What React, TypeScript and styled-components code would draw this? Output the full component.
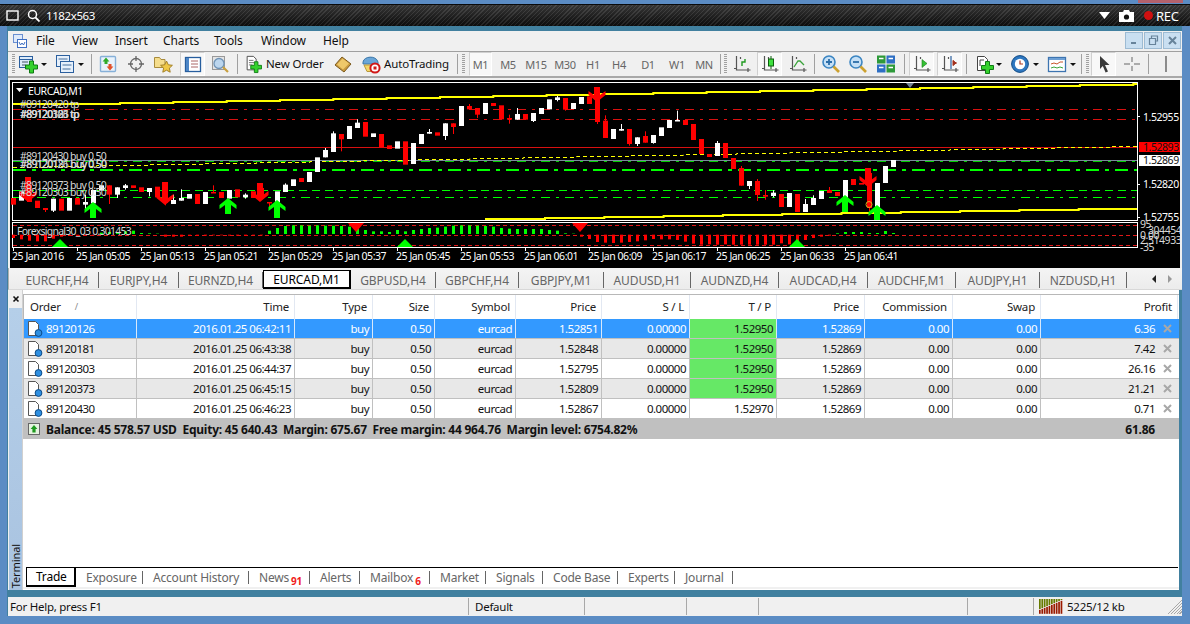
import React from "react";
import styled, { createGlobalStyle } from "styled-components";

const FONT = `"Noto Sans", "Open Sans", sans-serif`;

const GlobalStyle = createGlobalStyle`
  html, body { margin: 0; padding: 0; background: #5b8cc4; }
  * { box-sizing: border-box; }
`;

const Page = styled.div`
  width: 1190px;
  height: 624px;
  overflow: hidden;
  display: flex;
  flex-direction: column;
  background: #5b8cc4;
  font-family: ${FONT};
  font-size: 11px;
  letter-spacing: -0.1px;
  color: #111;
`;

const TopStrip = styled.div`
  height: 4px;
  flex: none;
  display: flex;
  justify-content: flex-end;
  padding-right: 7px;
`;

const RecMark = styled.div`
  width: 45px;
  height: 3px;
  background: #b4616c;
`;

const ScreenBar = styled.div`
  height: 22px;
  flex: none;
  display: flex;
  align-items: center;
  color: #fff;
  font-size: 11.5px;
  letter-spacing: -0.4px;
  border-top: 1px solid #0a0a0a;
  background:
    linear-gradient(180deg, rgba(120, 120, 120, 0.35), rgba(0, 0, 0, 0.35)),
    repeating-linear-gradient(135deg, #333 0 1px, #121212 1px 3px);
`;

const BarItem = styled.div<{ $w: number; $ml?: number }>`
  width: ${(p) => p.$w}px;
  margin-left: ${(p) => p.$ml ?? 0}px;
  flex: none;
  display: flex;
  align-items: center;
  justify-content: center;
`;

const BarText = styled.span<{ $ml?: number }>`
  margin-left: ${(p) => p.$ml ?? 0}px;
  flex: none;
`;

const BarRight = styled.div`
  margin-left: auto;
  padding-right: 9px;
  display: flex;
  align-items: center;
`;

const RecText = styled.span`
  width: 25px;
  margin-left: 3px;
  font-size: 13px;
  letter-spacing: -0.3px;
`;

const Frame = styled.div`
  flex: none;
  height: 590px;
  margin: 0 8px 0 7px;
  padding: 5px 0 0 1px;
  display: flex;
  flex-direction: column;
  background: #41809f;
`;

const MenuBar = styled.div`
  height: 20px;
  flex: none;
  display: flex;
  align-items: center;
  padding: 0 0 1px 5px;
  background: #f0f0f0;
  font-size: 12px;
`;

const MenuLogo = styled.div`
  width: 23px;
  flex: none;
  display: flex;
`;

const MenuItem = styled.span<{ $w: number }>`
  width: ${(p) => p.$w}px;
  flex: none;
`;

const WindowButtons = styled.div`
  margin-left: auto;
  margin-right: 1px;
  display: flex;
  gap: 1px;
`;

const WindowButton = styled.div`
  width: 18px;
  height: 17px;
  display: flex;
  align-items: center;
  justify-content: center;
  background: #c9dff1;
  border: 1px solid #9dbbd3;
`;

const Toolbar = styled.div`
  height: 27px;
  flex: none;
  display: flex;
  align-items: center;
  background: #f0f0f0;
  border-top: 1px solid #a0a0a0;
  border-bottom: 2px solid #a8a8a8;
`;

const Grip = styled.div<{ $ml: number }>`
  width: 3px;
  height: 20px;
  margin-left: ${(p) => p.$ml}px;
  flex: none;
  background: repeating-linear-gradient(180deg, #a0a0a0 0 1px, transparent 1px 2px);
`;

const Sep = styled.div<{ $ml: number }>`
  width: 1px;
  height: 20px;
  margin-left: ${(p) => p.$ml}px;
  flex: none;
  background: #a0a0a0;
`;

const Slot = styled.div<{ $w: number; $ml?: number; $on?: boolean }>`
  width: ${(p) => p.$w}px;
  height: 24px;
  margin-left: ${(p) => p.$ml ?? 0}px;
  flex: none;
  display: flex;
  align-items: center;
  justify-content: center;
  color: #666;
  font-size: 11px;
  letter-spacing: -0.3px;
  border: 1px solid ${(p) => (p.$on ? "#d0d0d0" : "transparent")};
  border-right-color: ${(p) => (p.$on ? "#fff" : "transparent")};
  border-bottom-color: ${(p) => (p.$on ? "#fff" : "transparent")};
  background: ${(p) => (p.$on ? "#f8f8f8" : "transparent")};
`;

const ToolLabel = styled.span<{ $w: number; $ml: number }>`
  width: ${(p) => p.$w}px;
  margin-left: ${(p) => p.$ml}px;
  padding-bottom: 2px;
  flex: none;
  font-size: 11.5px;
  letter-spacing: -0.15px;
  white-space: nowrap;
`;

const Caret = styled.div<{ $w?: number }>`
  width: ${(p) => p.$w ?? 7}px;
  flex: none;
  display: flex;
  justify-content: center;
  &::after {
    content: "";
    border-left: 3px solid transparent;
    border-right: 3px solid transparent;
    border-top: 3px solid #111;
  }
`;

const ChartWrap = styled.div`
  height: 190px;
  flex: none;
  padding: 2px 2px 0;
  background: #f0f0f0;
`;

const ChartSvg = styled.svg`
  display: block;
  background: #000;
  font-family: ${FONT};
  font-size: 10.5px;
  letter-spacing: -0.45px;
`;

const ChartNotes = styled.g`
  fill: #d8d8d8;
  letter-spacing: -0.75px;
`;

const SymbolTabs = styled.div`
  height: 22px;
  flex: none;
  display: flex;
  align-items: flex-start;
  padding: 2px 0 0 7px;
  background: linear-gradient(180deg, #f4f4f4, #ececec);
  border-left: 1px solid #b0b0b0;
  border-bottom: 1px solid #d8d8d8;
`;

const SymbolTab = styled.div<{ $w: number; $on?: boolean }>`
  width: ${(p) => p.$w}px;
  height: ${(p) => (p.$on ? 19 : 16)}px;
  margin-top: ${(p) => (p.$on ? 0 : 2)}px;
  flex: none;
  display: flex;
  align-items: center;
  justify-content: center;
  font-size: 12px;
  white-space: nowrap;
  color: ${(p) => (p.$on ? "#000" : "#666")};
  background: ${(p) => (p.$on ? "#fff" : "transparent")};
  border: ${(p) => (p.$on ? "1px solid #000" : "none")};
  border-right: ${(p) => (p.$on ? "2px solid #000" : "1px solid #666")};
  border-bottom-width: ${(p) => (p.$on ? 2 : 0)}px;
`;

const TabArrows = styled.div`
  margin-left: 25px;
  margin-top: 5px;
  display: flex;
  gap: 12px;
`;

const TabArrow = styled.div<{ $dir: "left" | "right" }>`
  width: 0;
  height: 0;
  border-top: 4px solid transparent;
  border-bottom: 4px solid transparent;
  ${(p) =>
    p.$dir === "left" ? "border-right: 4px solid #222;" : "border-left: 4px solid #999;"}
`;

const Terminal = styled.div`
  height: 300px;
  flex: none;
  display: flex;
  padding-right: 3px;
  background: #41809f;
`;

const SideStrip = styled.div`
  width: 15px;
  flex: none;
  display: flex;
  flex-direction: column;
  padding-left: 1px;
  background: #f0f0f0;
  border-right: 1px solid #d0d0d0;
`;

const SideClose = styled.div`
  height: 18px;
  flex: none;
  display: flex;
  padding: 5px 0 0 3px;
`;

const SideBody = styled.div`
  flex: 1;
  display: flex;
  align-items: flex-end;
  justify-content: center;
  padding-bottom: 2px;
  background: linear-gradient(180deg, #b5cfe9, #a9c3e0);
`;

const SideLabel = styled.span`
  writing-mode: vertical-rl;
  transform: rotate(180deg);
  color: #111;
  font-size: 11px;
`;

const TerminalMain = styled.div`
  flex: 1;
  min-width: 0;
  display: flex;
  flex-direction: column;
  background: #fff;
  padding-top: 4px;
`;

const Grid = styled.div`
  display: grid;
  grid-template-columns: 113px 158px 78px 62px 81px 86px 88px 87px 88px 88px 88px 137px;
`;

const HeadRow = styled(Grid)`
  height: 25px;
  border-top: 1px solid #b8b8b8;
  border-left: 1px solid #b8b8b8;
`;

const HeadCell = styled.div<{ $left?: boolean }>`
  display: flex;
  align-items: center;
  justify-content: ${(p) => (p.$left ? "flex-start" : "flex-end")};
  padding: 0 5px 2px 6px;
  font-size: 11.5px;
  letter-spacing: -0.2px;
  color: #222;
  border-right: 1px solid #e2e8f2;
`;

const SortMark = styled.span`
  margin-left: 14px;
  font-size: 9px;
  color: #888;
`;

const Row = styled(Grid)<{ $bg: string; $fg: string }>`
  height: 20px;
  background: ${(p) => p.$bg};
  color: ${(p) => p.$fg};
  border-bottom: 1px solid #c0c0c0;
  border-left: 1px solid #c0c0c0;
`;

const Cell = styled.div<{ $hit?: boolean; $sel?: boolean }>`
  display: flex;
  align-items: center;
  justify-content: flex-end;
  padding-right: 3px;
  white-space: nowrap;
  font-size: 11.5px;
  letter-spacing: -0.5px;
  background: ${(p) => (p.$hit ? "#66e866" : "transparent")};
  color: ${(p) => (p.$hit ? "#111" : "inherit")};
  border-right: 1px solid ${(p) => (p.$sel ? "#d8e8fa" : "#c0c0c0")};
`;

const OrderCell = styled(Cell)`
  justify-content: flex-start;
  padding-left: 3px;
  gap: 3px;
`;

const ProfitCell = styled(Cell)`
  padding-right: 6px;
  gap: 8px;
  border-right: none;
`;

const Summary = styled.div`
  height: 20px;
  display: flex;
  align-items: center;
  padding-left: 4px;
  background: #c0c0c0;
  border-left: 1px solid #c0c0c0;
  font-size: 12px;
  font-weight: 700;
  letter-spacing: -0.23px;
`;

const SummaryText = styled.span`
  margin-left: 6px;
  white-space: pre;
`;

const SummaryTotal = styled.span`
  margin-left: auto;
  margin-right: 24px;
`;

const TerminalFill = styled.div`
  flex: 1;
`;

const BottomTabs = styled.div`
  height: 20px;
  flex: none;
  display: flex;
  align-items: flex-start;
  margin-left: 3px;
  margin-right: 1px;
  border-top: 1px solid #000;
`;

const BottomTab = styled.div<{ $w: number; $on?: boolean }>`
  width: ${(p) => p.$w}px;
  height: ${(p) => (p.$on ? 19 : 13)}px;
  margin-top: ${(p) => (p.$on ? 0 : 3)}px;
  flex: none;
  display: flex;
  align-items: center;
  padding-left: ${(p) => (p.$on ? 9 : 10)}px;
  font-size: 12px;
  letter-spacing: -0.2px;
  white-space: nowrap;
  color: ${(p) => (p.$on ? "#000" : "#666")};
  background: ${(p) => (p.$on ? "#fff" : "transparent")};
  border-right: ${(p) => (p.$on ? "2px solid #000" : "1px solid #666")};
  border-left: ${(p) => (p.$on ? "1px solid #000" : "none")};
  border-bottom: ${(p) => (p.$on ? "2px solid #000" : "none")};
`;

const Badge = styled.span`
  margin: 7px 0 0 2px;
  color: #f02020;
  font-size: 10px;
  font-weight: 700;
  line-height: 1;
`;

const TerminalFoot = styled.div`
  height: 3px;
  flex: none;
  background: #f0f0f0;
  border-bottom: 1px solid #fff;
`;

const Gap = styled.div`
  height: 7px;
  flex: none;
`;

const StatusBar = styled.div`
  height: 19px;
  flex: none;
  display: grid;
  grid-template-columns: 461px 116px 102px 72px 209px 66px 1fr;
  background: #f0f0f0;
  font-size: 11.5px;
  letter-spacing: -0.25px;
`;

const StatusCell = styled.div<{ $last?: boolean; $pl?: number }>`
  display: flex;
  align-items: center;
  gap: 4px;
  padding-left: ${(p) => p.$pl ?? (p.$last ? 5 : 2)}px;
  padding-bottom: 1px;
  border-right: ${(p) => (p.$last ? "none" : "1px solid #a8a8a8")};
  white-space: nowrap;
  margin: 1px 0;
`;

const StatusGrip = styled.div`
  margin-left: auto;
  width: 15px;
  height: 15px;
  align-self: flex-end;
  background: repeating-linear-gradient(135deg, transparent 0 1px, #a8a8a8 1px 2px);
  clip-path: polygon(100% 0, 100% 100%, 0 100%);
`;

const I: React.FC<{ s?: number; h?: number; children: React.ReactNode }> = ({ s = 20, h, children }) => (
  <svg width={s} height={h ?? s} viewBox={`0 0 ${s} ${h ?? s}`} fill="none">
    {children}
  </svg>
);

const Plus = ({ x, y }: { x: number; y: number }) => (
  <path
    transform={`translate(${x} ${y})`}
    d="M4 0h4v4h4v4H8v4H4V8H0V4h4z"
    fill="#34d12c"
    stroke="#0f7a14"
  />
);

const Axes = ({ x = 3, y = 2, w = 14, h = 14 }: { x?: number; y?: number; w?: number; h?: number }) => (
  <path
    d={`M${x + 1.5} ${y}v${h}h${w}M${x - 1} ${y + h - 1.5}h3M${x + 5.5} ${y + 1}v2M${x + w - 1} ${y + h - 2}v4`}
    stroke="#555"
    strokeWidth="1.2"
  />
);

const NewChartIcon = () => (
  <I>
    <rect x="1.5" y="2.5" width="13" height="11" fill="#dcebfa" stroke="#2b5f9e" />
    <path d="M1.5 5.5h13" stroke="#2b5f9e" />
    <path d="M4 8h6M4 11h4" stroke="#456" />
    <Plus x={7.5} y={7} />
  </I>
);

const ProfilesIcon = () => (
  <I>
    <rect x="1.5" y="1.5" width="13" height="11" fill="#e6f0fb" stroke="#2b5f9e" />
    <rect x="5.5" y="7.5" width="13" height="11" fill="#e6f0fb" stroke="#2b5f9e" />
    <path d="M3.5 5h9M7.5 11h9M7.5 15h8" stroke="#46709e" />
  </I>
);

const MarketIcon = () => (
  <I>
    <rect x="2.5" y="2.5" width="15" height="15" rx="1" fill="#e9f2fb" stroke="#86b0d8" strokeWidth="1.4" />
    <path d="M8 3.5l3.4 4H9.5V10h-3V7.5H4.6z" fill="#2faa2a" />
    <path d="M12 16.5l3.4-4h-1.9V10h-3v2.5H8.6z" fill="#e2512a" />
  </I>
);

const TargetIcon = () => (
  <I>
    <circle cx="10" cy="10" r="5.5" stroke="#666" strokeWidth="1.3" />
    <path d="M10 2v5M10 13v5M2 10h5M13 10h5" stroke="#666" strokeWidth="1.3" />
  </I>
);

const NavigatorIcon = () => (
  <I>
    <path d="M1.5 3.5h5l1.5 2h4v8h-10.5z" fill="#f5dd8c" stroke="#a88b3c" />
    <path d="M13.5 7l1.8 3.8 4.1.5-3 2.8.8 4.1-3.7-2-3.7 2 .8-4.1-3-2.8 4.1-.5z" fill="#efc846" stroke="#a3812a" />
  </I>
);

const TerminalIcon = () => (
  <I>
    <rect x="2.5" y="3.5" width="15" height="14" fill="#fff" stroke="#275e9e" strokeWidth="1.3" />
    <rect x="3" y="4" width="3" height="13" fill="#4d86c6" />
    <path d="M8 7h7M8 10h7M8 13h7" stroke="#a66" />
  </I>
);

const TesterIcon = () => (
  <I>
    <rect x="2.5" y="2.5" width="12" height="13" fill="#e4e4e4" stroke="#999" />
    <circle cx="9" cy="9.5" r="5" fill="#bcd6ee" stroke="#6f93b6" strokeWidth="1.3" />
    <path d="M13 13l5 5" stroke="#c8a040" strokeWidth="2.2" />
  </I>
);

const NewOrderIcon = () => (
  <I>
    <path d="M3.5 1.5h7l3 3v12h-10z" fill="#fff" stroke="#444" />
    <path d="M5.5 6h5M5.5 8.5h6M5.5 11h4" stroke="#666" />
    <Plus x={7.5} y={7.5} />
  </I>
);

const BookIcon = () => (
  <I>
    <path d="M2 11l7-8 9 7-7 8z" fill="#c99a3f" stroke="#7c5a1c" />
    <path d="M4 10.5l5.5-6 6.5 5-6 6z" fill="#eec86a" />
  </I>
);

const AutoIcon = () => (
  <I>
    <path d="M2 8c1-6 13-7 15 0v2H2z" fill="#6aa6d8" stroke="#3f78a8" />
    <path d="M3 11h14l-2 6.5H6z" fill="#f4d869" stroke="#b9983a" />
    <circle cx="14" cy="14" r="4.6" fill="#fff" stroke="#d01818" strokeWidth="2" />
    <rect x="12.5" y="12.5" width="3" height="3" fill="#d01818" />
  </I>
);

const LineChartIcon = () => (
  <I>
    <Axes />
    <path d="M10 12V8h3V5" stroke="#1f9a1f" strokeWidth="1.4" />
  </I>
);

const CandleIcon = () => (
  <I>
    <Axes />
    <path d="M11 2v13" stroke="#0d5f0d" />
    <rect x="8.5" y="5" width="5" height="7" fill="#3ee03e" stroke="#0d5f0d" />
  </I>
);

const CurveIcon = () => (
  <I>
    <Axes />
    <path d="M6 13l4-6 2 0 4 4" stroke="#3aa33a" strokeWidth="1.3" />
  </I>
);

const ZoomIcon = ({ minus }: { minus?: boolean }) => (
  <I>
    <circle cx="8" cy="8" r="6" fill="#c6e0f6" stroke="#3b85c2" strokeWidth="1.6" />
    <path d={minus ? "M5 8h6" : "M5 8h6M8 5v6"} stroke="#2c6ea8" strokeWidth="1.8" />
    <path d="M12.5 12.5l5.5 5.5" stroke="#cda22f" strokeWidth="2.6" />
  </I>
);

const TileIcon = () => (
  <I>
    <rect x="1" y="1.5" width="8.5" height="8" fill="#2e9a3a" />
    <rect x="10.5" y="1.5" width="8.5" height="8" fill="#2e6fc4" />
    <rect x="1" y="10.5" width="8.5" height="8" fill="#2e6fc4" />
    <rect x="10.5" y="10.5" width="8.5" height="8" fill="#2e9a3a" />
    <path d="M3 4.5h4.5M12.5 4.5h4.5M3 13.5h4.5M12.5 13.5h4.5" stroke="#fff" strokeWidth="1.4" />
  </I>
);

const ScrollIcon = () => (
  <I>
    <Axes />
    <path d="M10 5.5l5 4-5 4z" fill="#35c035" stroke="#1a801a" strokeWidth=".6" />
  </I>
);

const ShiftIcon = () => (
  <I>
    <Axes />
    <path d="M11 2v13" stroke="#2b5f9e" strokeWidth="1.2" />
    <path d="M17 9h-3M16 9l-3-2.6v5.2z" fill="#a2301c" stroke="#a2301c" />
  </I>
);

const InsertIcon = () => (
  <I>
    <path d="M3.5 2.5h7l3 3v11h-10z" fill="#fff" stroke="#444" />
    <path d="M6 6h4M6 6v6" stroke="#444" />
    <Plus x={7.5} y={7.5} />
  </I>
);

const ClockIcon = () => (
  <I>
    <circle cx="10" cy="10" r="8.4" fill="#2e77c0" stroke="#134c86" />
    <circle cx="10" cy="10" r="5.2" fill="#fff" />
    <path d="M10 6.5V10h3" stroke="#b03a20" strokeWidth="1.2" />
  </I>
);

const TemplateIcon = () => (
  <I>
    <rect x="1.5" y="3.5" width="17" height="14" fill="#fff" stroke="#3d74b0" strokeWidth="1.3" />
    <rect x="2" y="4" width="16" height="2" fill="#6d9fd4" />
    <path d="M4 10l3-1 3 1 3-2 3 0" stroke="#c8552a" />
    <path d="M4 14l3-1 3 1 3-1 3 1" stroke="#3aa33a" />
  </I>
);

const CursorIcon = () => (
  <I>
    <path d="M6 2l9.5 9H11l3 6.5-2.4 1-2.8-6.6L6 15z" fill="#3a3a3a" />
  </I>
);

const ThinCross = () => (
  <I>
    <path d="M10 3v5M10 12v5M2 10h6M12 10h6" stroke="#666" />
  </I>
);

const VLine = () => (
  <I>
    <path d="M10 2v16" stroke="#555" strokeWidth="1.3" />
  </I>
);

const AppLogo = () => (
  <I s={14}>
    <rect x=".5" y=".5" width="9" height="8" fill="#dfeafa" stroke="#6a8fd0" />
    <rect x="4.5" y="5.5" width="9" height="8" fill="#fff" stroke="#3f6fc2" />
    <path d="M6 8l1.5 3L9 9l1.5 2L12 8" stroke="#3f6fc2" />
  </I>
);

const OrderDoc = () => (
  <I s={16}>
    <path d="M1.5 .5h7l3 3v11h-10z" fill="#fff" stroke="#555" />
    <circle cx="11.5" cy="12" r="3.4" fill="#2f8fe0" stroke="#0a4a88" />
  </I>
);

const CloseCross = () => (
  <I s={9}>
    <path d="M1 1l7 7M8 1l-7 7" stroke="#a8a8a8" strokeWidth="2" />
  </I>
);

const UpBox = () => (
  <I s={12}>
    <rect x=".5" y=".5" width="11" height="11" fill="#e6f3e0" stroke="#666" />
    <path d="M6 2l3.4 4H7.6v3.5H4.4V6H2.6z" fill="#1f9a1f" />
  </I>
);

const MeterIcon = () => (
  <svg width="24" height="15" viewBox="0 0 24 15">
    {Array.from({ length: 10 }).map((_, k) => {
      const top = 10 - k;
      return (
        <g key={k}>
          <rect x={k * 2.4} y={0} width={1.7} height={Math.max(top, 1)} fill="#667a00" />
          <rect x={k * 2.4} y={Math.max(top, 1) + 0.8} width={1.7} height={14 - Math.max(top, 1)} fill="#9a1a00" />
        </g>
      );
    })}
  </svg>
);

// chart bars, y values are offsets in 1/3 px from y=78: [kind, bodyTop, bodyBottom, wickTop, wickBottom]
type Bar = [string, number, number, number?, number?];
const bars: Bar[] = [
  ["r", 360, 380], ["w", 340, 368], ["r", 320, 372], ["r", 368, 390], ["r", 390, 396, 390, 402],
  ["w", 362, 398, 362, 402], ["r", 362, 398], ["w", 360, 398], ["r", 360, 380], ["w", 372, 380, 350, 400],
  ["w", 336, 376], ["w", 322, 338], ["r", 322, 350, 322, 378], ["w", 328, 350, 328, 360], ["w", 322, 330, 318, 335],
  ["r", 322, 330], ["r", 328, 342], ["w", 330, 342, 330, 355], ["r", 326, 358], ["r", 340, 375, 312, 382],
  ["w", 366, 378, 350, 378], ["w", 360, 368, 334, 368], ["w", 348, 362], ["r", 348, 378], ["w", 342, 378],
  ["r", 342, 344, 322, 344], ["r", 342, 360], ["w", 336, 362], ["r", 334, 358], ["w", 350, 358, 346, 362],
  ["r", 340, 360], ["r", 330, 360], ["r", 372, 376, 372, 390], ["w", 340, 374], ["w", 320, 342, 316, 342],
  ["w", 304, 324], ["r", 300, 312], ["w", 282, 312], ["w", 238, 282], ["w", 216, 238, 210, 238],
  ["w", 166, 222, 160, 222], ["r", 168, 184, 168, 220], ["w", 144, 183], ["w", 134, 150, 124, 150], ["r", 132, 176],
  ["w", 166, 177], ["r", 168, 208], ["r", 202, 213], ["w", 190, 212],
  ["r", 190, 260], ["w", 195, 258], ["w", 168, 198], ["w", 162, 167, 153, 167], ["r", 163, 173],
  ["w", 136, 174, 136, 186], ["r", 136, 147, 136, 168], ["w", 84, 144], ["r", 84, 94, 78, 94], ["r", 90, 110, 90, 120],
  ["w", 75, 108], ["r", 75, 84], ["r", 82, 124], ["r", 120, 125, 110, 137], ["w", 108, 125, 90, 125],
  ["r", 108, 125], ["w", 105, 129, 105, 132], ["w", 90, 108], ["w", 64, 94], ["w", 58, 66, 50, 70],
  ["r", 60, 95, 60, 98], ["w", 75, 93], ["w", 57, 78], ["r", 55, 78], ["r", 55, 132, 55, 138],
  ["r", 128, 180, 112, 180], ["w", 153, 183], ["w", 153, 158, 138, 158], ["r", 153, 198, 153, 203], ["w", 178, 198, 178, 204],
  ["r", 174, 194, 160, 194], ["w", 171, 195, 171, 197], ["w", 148, 174], ["w", 126, 150], ["w", 126, 128, 98, 128],
  ["r", 126, 141], ["r", 138, 186], ["r", 183, 228], ["r", 228, 237], ["w", 195, 234, 189, 234],
  ["r", 195, 240], ["r", 240, 273], ["r", 270, 323, 264, 323], ["w", 309, 324, 309, 333], ["r", 309, 351, 303, 369],
  ["r", 351, 356, 336, 365], ["w", 344, 354, 337, 358], ["r", 348, 387], ["w", 345, 387], ["r", 348, 402],
  ["w", 378, 402, 363, 402], ["w", 360, 381, 352, 381], ["w", 339, 363], ["r", 336, 345, 327, 345], ["r", 342, 354],
  ["w", 306, 360], ["r", 303, 321], ["r", 315, 320], ["r", 285, 390, 285, 400], ["w", 315, 390], ["w", 264, 315],
  ["w", 246, 267],
];

// indicator: below 469 is a green bar up from 468, above is a red bar down from 470
const signal = [
  480, 484, 488, 490, 490, 482, 476, 474, 474, 472, 472, 464, 462, 462, 460, 458, 465, 466, 467, 476, 476, 476, 474, 474,
  473, 472, 472, 473, 473, 474, 472, 472, 458, 450, 444, 442, 442, 443, 442, 443, 443, 444, 446, 450, 456, 460, 460, 462,
  456, 460, 456, 453, 450, 449, 446, 443, 442, 442, 443, 444, 446, 450, 452, 453, 453, 453, 453, 456, 458, 466, 467, 476,
  483, 492, 494, 495, 494, 492, 490, 487, 483, 484, 484, 486, 491, 497, 500, 499, 500, 499, 500, 500, 500, 500, 500, 500,
  496, 499, 496, 486, 480, 476, 473, 466, 462, 462, 462, 465, 465, 459, 465,
];

const zy = (z: number) => 78 + z / 3;
const RED = "#ff0000";
const LIME = "#00ff00";

const stepLine = (x0: number, x1: number, y0: number, first: number, step: number, dy: number) => {
  let d = `M${x0} ${y0}`;
  let y = y0;
  for (let x = first; x < x1; x += step) {
    d += `H${x.toFixed(1)}`;
    y += dy;
    d += `V${y}`;
  }
  return `${d}H${x1}`;
};

const UpArrow = ({ x, t, b, c = LIME }: { x: number; t: number; b: number; c?: string }) => (
  <polygon
    fill={c}
    points={`${x},${t} ${x + 8.5},${t + 7} ${x + 8.5},${t + 11} ${x + 3},${t + 7} ${x + 3},${b} ${x - 3},${b} ${x - 3},${t + 7} ${x - 8.5},${t + 11} ${x - 8.5},${t + 7}`}
  />
);

const DownArrow = ({ x, t, b }: { x: number; t: number; b: number }) => (
  <polygon
    fill={RED}
    points={`${x},${b} ${x + 8.5},${b - 7} ${x + 8.5},${b - 11} ${x + 3},${b - 7} ${x + 3},${t} ${x - 3},${t} ${x - 3},${b - 7} ${x - 8.5},${b - 11} ${x - 8.5},${b - 7}`}
  />
);

const timeLabels = [
  "25 Jan 2016", "25 Jan 05:05", "25 Jan 05:13", "25 Jan 05:21", "25 Jan 05:29", "25 Jan 05:37", "25 Jan 05:45",
  "25 Jan 05:53", "25 Jan 06:01", "25 Jan 06:09", "25 Jan 06:17", "25 Jan 06:25", "25 Jan 06:33", "25 Jan 06:41",
];

const Chart = () => (
  <ChartSvg width={1170} height={188} viewBox="10 80 1170 188">
    <rect x="12.5" y="82.5" width="1125" height="138" fill="none" stroke="#fff" />
    <rect x="12.5" y="222.5" width="1125" height="25" fill="none" stroke="#fff" />

    <path d="M13 109.5H1137M13 119.5H1137" stroke="#d81010" strokeDasharray="9 6 3 6" />
    <path d="M13 147.5H1137" stroke="#d81010" />
    <path d="M13 161.5H1137" stroke={LIME} strokeDasharray="9 6 3 6" opacity="0.8" />
    <path d="M13 160.5H1137" stroke="#7a8a9a" />
    <path d="M13 170H1137" stroke={LIME} strokeWidth="2" strokeDasharray="13 6 4 6" />
    <path d="M13 190.5H1137" stroke={LIME} strokeDasharray="8 5" />
    <path d="M13 197.5H1137" stroke={LIME} strokeDasharray="9 6 3 6" />
    <path d={stepLine(13, 1137, 167.5, 43.3, 53.33, -1)} stroke="#ffff00" strokeDasharray="4 3" fill="none" />

    {bars.map(([k, t, b, wt, wb], i) => {
      const c = 13 + 8 * i;
      const col = k === "w" ? "#fff" : RED;
      return (
        <g key={i} fill={col}>
          {wt !== undefined && <rect x={c} y={zy(wt)} width={1} height={((wb as number) - wt) / 3} />}
          <rect x={c - 2} y={zy(t)} width={5} height={Math.max((b - t) / 3, 1.5)} />
        </g>
      );
    })}

    <path d={stepLine(13, 1137, 104, 120, 53.33, -1)} stroke="#ffff00" strokeWidth="2" fill="none" />
    <path d={stepLine(485, 1137, 219, 545, 59.3, -1)} stroke="#ffff00" strokeWidth="2" fill="none" />

    <DownArrow x={28} t={177} b={202} />
    <DownArrow x={165} t={182} b={205} />
    <DownArrow x={260} t={183} b={202} />
    <DownArrow x={597} t={87} b={102} />
    <DownArrow x={868} t={168} b={187} />
    <UpArrow x={93} t={202} b={218} />
    <UpArrow x={228} t={198} b={214} />
    <UpArrow x={277} t={200} b={218} />
    <UpArrow x={845} t={195} b={212} />
    <UpArrow x={877} t={205} b={220} />
    <circle cx="869" cy="204.5" r="3" fill="none" stroke="#d8b020" />
    <polygon points="906,83 914,83 910,88" fill="#708090" />
    <polygon points="16,88 23,88 19.5,92" fill="#fff" />

    <g fill="#fff">
      <text x="28" y="94.5">EURCAD,M1</text>
    </g>
    <ChartNotes>
      <text x="20" y="108">#89120420 tp</text>
      <text x="20" y="118">#89120126 tp</text>
      <text x="20.5" y="118">#89120181 tp</text>
      <text x="20" y="118">#89120303 tp</text>
      <text x="20" y="159.5">#89120430 buy 0.50</text>
      <text x="20" y="168">#89120126 buy 0.50</text>
      <text x="20.5" y="168">#89120181 buy 0.50</text>
      <text x="20" y="188.5">#89120373 buy 0.50</text>
      <text x="20" y="196">#89120303 buy 0.50</text>
    </ChartNotes>

    <path d="M13 225.5H1137M13 235.5H1137M13 245.5H1137" stroke="#e01818" strokeDasharray="4 3" />
    {signal.map((v, i) => {
      const c = 13 + 8 * i;
      return v < 469 ? (
        <rect key={i} x={c - 1} y={zy(v)} width={3} height={(468 - v) / 3} fill={LIME} />
      ) : (
        <rect key={i} x={c - 1} y={zy(470)} width={3} height={(v - 470) / 3} fill={RED} />
      );
    })}
    <polygon points="60,239 68,247 52,247" fill={LIME} />
    <polygon points="405,239 413,247 397,247" fill={LIME} />
    <polygon points="797,239 805,247 789,247" fill={LIME} />
    <polygon points="356,232 348,223 364,223" fill={RED} />
    <polygon points="580,232 572,223 588,223" fill={RED} />
    <ChartNotes>
      <text x="17" y="235">Forexsignal30_03 0.301453</text>
    </ChartNotes>

    <path d="M1137 116.5h3M1137 184.5h3M1137 217.5h3" stroke="#fff" />
    <g fill="#fff">
      <text x="1143" y="120.5">1.52955</text>
      <text x="1143" y="188">1.52820</text>
      <text x="1143" y="221">1.52755</text>
    </g>
    <rect x="1139" y="142" width="41" height="10" fill={RED} />
    <text x="1143" y="151" fill="#111">1.52893</text>
    <rect x="1139" y="155" width="41" height="11" fill="#fff" />
    <text x="1143" y="164" fill="#111">1.52869</text>
    <g fill="#d8d8d8">
      <text x="1140" y="228">95</text>
      <text x="1148" y="233.5">304454</text>
      <text x="1140" y="239">0.00</text>
      <text x="1140" y="244">2.514933</text>
      <text x="1140" y="250.5">-35</text>
    </g>

    {timeLabels.map((t, i) => {
      const x = 13 + 64 * i;
      return (
        <g key={t}>
          <path d={`M${x + 0.5} 248v3`} stroke="#fff" />
          <text x={i === 0 ? 12 : x - 1} y="260" fill="#fff">
            {t}
          </text>
        </g>
      );
    })}
  </ChartSvg>
);

const symbolTabs = [
  { t: "EURCHF,H4", w: 83 },
  { t: "EURJPY,H4", w: 80 },
  { t: "EURNZD,H4", w: 84 },
  { t: "EURCAD,M1", w: 88, on: true },
  { t: "GBPUSD,H4", w: 85 },
  { t: "GBPCHF,H4", w: 83 },
  { t: "GBPJPY,M1", w: 85 },
  { t: "AUDUSD,H1", w: 87 },
  { t: "AUDNZD,H4", w: 88 },
  { t: "AUDCAD,H4", w: 89 },
  { t: "AUDCHF,M1", w: 88 },
  { t: "AUDJPY,H1", w: 84 },
  { t: "NZDUSD,H1", w: 87 },
];

type Order = { id: string; time: string; open: string; tp: string; hit: boolean; profit: string };
const orders: Order[] = [
  { id: "89120126", time: "2016.01.25 06:42:11", open: "1.52851", tp: "1.52950", hit: true, profit: "6.36" },
  { id: "89120181", time: "2016.01.25 06:43:38", open: "1.52848", tp: "1.52950", hit: true, profit: "7.42" },
  { id: "89120303", time: "2016.01.25 06:44:37", open: "1.52795", tp: "1.52950", hit: true, profit: "26.16" },
  { id: "89120373", time: "2016.01.25 06:45:15", open: "1.52809", tp: "1.52950", hit: true, profit: "21.21" },
  { id: "89120430", time: "2016.01.25 06:46:23", open: "1.52867", tp: "1.52970", hit: false, profit: "0.71" },
];

const headers = ["Time", "Type", "Size", "Symbol", "Price", "S / L", "T / P", "Price", "Commission", "Swap"];

const bottomTabs = [
  { t: "Trade", w: 50, on: true },
  { t: "Exposure", w: 67 },
  { t: "Account History", w: 106 },
  { t: "News", w: 61, n: "91" },
  { t: "Alerts", w: 50 },
  { t: "Mailbox", w: 70, n: "6" },
  { t: "Market", w: 56 },
  { t: "Signals", w: 57 },
  { t: "Code Base", w: 75 },
  { t: "Experts", w: 57 },
  { t: "Journal", w: 58 },
];

export default function App() {
  return (
    <Page>
      <GlobalStyle />
      <TopStrip>
        <RecMark />
      </TopStrip>
      <ScreenBar>
        <BarItem $w={13} $ml={6}>
          <I s={13} h={11}>
            <rect x="1" y="1" width="11" height="9" stroke="#fff" strokeWidth="1.4" />
          </I>
        </BarItem>
        <BarItem $w={13} $ml={8}>
          <I s={13}>
            <circle cx="5.5" cy="5.5" r="4" stroke="#fff" strokeWidth="1.5" />
            <path d="M8.5 8.5l4 4" stroke="#fff" strokeWidth="1.8" />
          </I>
        </BarItem>
        <BarText $ml={6}>1182x563</BarText>
        <BarRight>
          <BarItem $w={11}>
            <I s={11} h={7}>
              <path d="M0 0h11L5.5 7z" fill="#fff" />
            </I>
          </BarItem>
          <BarItem $w={15} $ml={9}>
            <I s={15} h={12}>
              <path d="M0 2h4l1-2h5l1 2h4v10H0z" fill="#fff" />
              <circle cx="7.5" cy="7" r="2.6" fill="#111" />
            </I>
          </BarItem>
          <BarItem $w={9} $ml={10}>
            <I s={9}>
              <circle cx="4.5" cy="4.5" r="4.5" fill="#d01010" />
            </I>
          </BarItem>
          <RecText>REC</RecText>
        </BarRight>
      </ScreenBar>
      <Frame>
        <MenuBar>
          <MenuLogo>
            <AppLogo />
          </MenuLogo>
          <MenuItem $w={36}>File</MenuItem>
          <MenuItem $w={43}>View</MenuItem>
          <MenuItem $w={48}>Insert</MenuItem>
          <MenuItem $w={51}>Charts</MenuItem>
          <MenuItem $w={47}>Tools</MenuItem>
          <MenuItem $w={62}>Window</MenuItem>
          <MenuItem $w={40}>Help</MenuItem>
          <WindowButtons>
            <WindowButton>
              <I s={9}>
                <path d="M1 7h5" stroke="#67839a" strokeWidth="2" />
              </I>
            </WindowButton>
            <WindowButton>
              <I s={11}>
                <path d="M3.5 3V1h6v5H7.5M1.5 3.5h6v6h-6z" stroke="#67839a" strokeWidth="1.2" />
              </I>
            </WindowButton>
            <WindowButton>
              <I s={9}>
                <path d="M1 1l7 7M8 1l-7 7" stroke="#67839a" strokeWidth="2" />
              </I>
            </WindowButton>
          </WindowButtons>
        </MenuBar>

        <Toolbar>
          <Grip $ml={4} />
          <Slot $w={24} $ml={1}><NewChartIcon /></Slot>
          <Caret />
          <Slot $w={24} $ml={6}><ProfilesIcon /></Slot>
          <Caret />
          <Sep $ml={7} />
          <Slot $w={24} $ml={4}><MarketIcon /></Slot>
          <Slot $w={24} $ml={4}><TargetIcon /></Slot>
          <Slot $w={24} $ml={3}><NavigatorIcon /></Slot>
          <Slot $w={25} $ml={5} $on><TerminalIcon /></Slot>
          <Slot $w={24} $ml={3}><TesterIcon /></Slot>
          <Sep $ml={5} />
          <Slot $w={20} $ml={5}><NewOrderIcon /></Slot>
          <ToolLabel $w={58} $ml={3}>New Order</ToolLabel>
          <Slot $w={24} $ml={7}><BookIcon /></Slot>
          <Slot $w={24} $ml={4}><AutoIcon /></Slot>
          <ToolLabel $w={67} $ml={1}>AutoTrading</ToolLabel>
          <Sep $ml={6} />
          <Grip $ml={4} />
          <Slot $w={23} $ml={4} $on>M1</Slot>
          <Slot $w={28} $ml={2}>M5</Slot>
          <Slot $w={28}>M15</Slot>
          <Slot $w={28} $ml={1}>M30</Slot>
          <Slot $w={26} $ml={1}>H1</Slot>
          <Slot $w={26}>H4</Slot>
          <Slot $w={28} $ml={2}>D1</Slot>
          <Slot $w={28} $ml={1}>W1</Slot>
          <Slot $w={26}>MN</Slot>
          <Sep $ml={3} />
          <Grip $ml={3} />
          <Slot $w={24} $ml={3}><LineChartIcon /></Slot>
          <Slot $w={25} $ml={3} $on><CandleIcon /></Slot>
          <Slot $w={24} $ml={4}><CurveIcon /></Slot>
          <Sep $ml={4} />
          <Slot $w={24} $ml={4}><ZoomIcon /></Slot>
          <Slot $w={24} $ml={3}><ZoomIcon minus /></Slot>
          <Slot $w={24} $ml={4}><TileIcon /></Slot>
          <Sep $ml={6} />
          <Slot $w={25} $ml={4} $on><ScrollIcon /></Slot>
          <Slot $w={25} $ml={3} $on><ShiftIcon /></Slot>
          <Sep $ml={4} />
          <Slot $w={23} $ml={5}><InsertIcon /></Slot>
          <Caret />
          <Slot $w={24} $ml={6}><ClockIcon /></Slot>
          <Caret />
          <Slot $w={24} $ml={6}><TemplateIcon /></Slot>
          <Caret />
          <Sep $ml={5} />
          <Grip $ml={4} />
          <Slot $w={25} $ml={2} $on><CursorIcon /></Slot>
          <Slot $w={24} $ml={4}><ThinCross /></Slot>
          <Sep $ml={4} />
          <Slot $w={24} $ml={5}><VLine /></Slot>
        </Toolbar>

        <ChartWrap>
          <Chart />
        </ChartWrap>

        <SymbolTabs>
          {symbolTabs.map((s) => (
            <SymbolTab key={s.t} $w={s.w} $on={s.on}>
              {s.t}
            </SymbolTab>
          ))}
          <TabArrows>
            <TabArrow $dir="left" />
            <TabArrow $dir="right" />
          </TabArrows>
        </SymbolTabs>

        <Terminal>
          <SideStrip>
            <SideClose>
              <I s={9}>
                <path d="M1.5 1.5l5 5M6.5 1.5l-5 5" stroke="#111" strokeWidth="1.6" />
              </I>
            </SideClose>
            <SideBody>
              <SideLabel>Terminal</SideLabel>
            </SideBody>
          </SideStrip>
          <TerminalMain>
            <HeadRow>
              <HeadCell $left>
                Order<SortMark>/</SortMark>
              </HeadCell>
              {headers.map((h, i) => (
                <HeadCell key={i}>{h}</HeadCell>
              ))}
              <HeadCell>Profit</HeadCell>
            </HeadRow>
            {orders.map((o, i) => {
              const sel = i === 0;
              return (
                <Row key={o.id} $bg={sel ? "#3399ff" : i % 2 ? "#e8e8e8" : "#fff"} $fg={sel ? "#fff" : "#111"}>
                  <OrderCell $sel={sel}>
                    <OrderDoc />
                    {o.id}
                  </OrderCell>
                  <Cell $sel={sel}>{o.time}</Cell>
                  <Cell $sel={sel}>buy</Cell>
                  <Cell $sel={sel}>0.50</Cell>
                  <Cell $sel={sel}>eurcad</Cell>
                  <Cell $sel={sel}>{o.open}</Cell>
                  <Cell $sel={sel}>0.00000</Cell>
                  <Cell $sel={sel} $hit={o.hit}>{o.tp}</Cell>
                  <Cell $sel={sel}>1.52869</Cell>
                  <Cell $sel={sel}>0.00</Cell>
                  <Cell $sel={sel}>0.00</Cell>
                  <ProfitCell $sel={sel}>
                    {o.profit}
                    <CloseCross />
                  </ProfitCell>
                </Row>
              );
            })}
            <Summary>
              <UpBox />
              <SummaryText>
                {"Balance: 45 578.57 USD  Equity: 45 640.43  Margin: 675.67  Free margin: 44 964.76  Margin level: 6754.82%"}
              </SummaryText>
              <SummaryTotal>61.86</SummaryTotal>
            </Summary>
            <TerminalFill />
            <BottomTabs>
              {bottomTabs.map((b) => (
                <BottomTab key={b.t} $w={b.w} $on={b.on}>
                  {b.t}
                  {b.n && <Badge>{b.n}</Badge>}
                </BottomTab>
              ))}
            </BottomTabs>
            <TerminalFoot />
          </TerminalMain>
        </Terminal>
        <Gap />
        <StatusBar>
          <StatusCell>For Help, press F1</StatusCell>
          <StatusCell $pl={6}>Default</StatusCell>
          <StatusCell />
          <StatusCell />
          <StatusCell />
          <StatusCell />
          <StatusCell $last>
            <MeterIcon />
            5225/12 kb
            <StatusGrip />
          </StatusCell>
        </StatusBar>
      </Frame>
    </Page>
  );
}
